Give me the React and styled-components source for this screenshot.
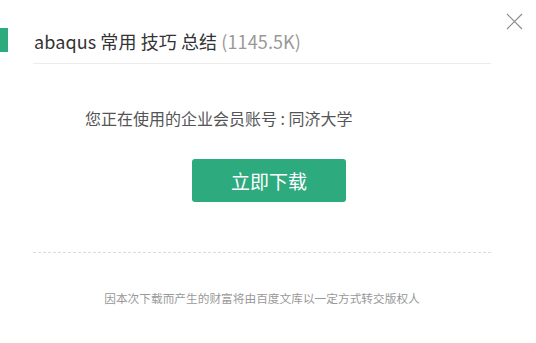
import React from "react";
import styled, { createGlobalStyle } from "styled-components";

const GlobalStyle = createGlobalStyle`
  html, body {
    margin: 0;
    padding: 0;
    background: #ffffff;
  }
  body {
    font-family: "Noto Sans CJK SC", "Noto Sans", sans-serif;
  }
`;

const App = () => {
  return (
    <Dialog>
      <GlobalStyle />
      <CloseButton aria-label="close">
        <svg width="17" height="17" viewBox="0 0 17 17">
          <path d="M1 1 L16 16 M16 1 L1 16" stroke="#8a8a8a" strokeWidth="1.1" />
        </svg>
      </CloseButton>
      <Header>
        <Marker />
        <Title>
          abaqus 常用 技巧 总结 <Size>(1145.5K)</Size>
        </Title>
      </Header>
      <Content>
        <Account>您正在使用的企业会员账号 : 同济大学</Account>
        <ButtonRow>
          <DownloadButton>立即下载</DownloadButton>
        </ButtonRow>
        <Footer>因本次下载而产生的财富将由百度文库以一定方式转交版权人</Footer>
      </Content>
    </Dialog>
  );
};
export default App;

const Dialog = styled.div`
  position: relative;
  width: 536px;
  height: 343px;
  background: #fff;
  overflow: hidden;
`;

const CloseButton = styled.div`
  position: absolute;
  top: 13px;
  left: 506px;
  width: 17px;
  height: 17px;
  display: flex;
`;

const Header = styled.div`
  display: flex;
  align-items: center;
  gap: 26px;
  padding-top: 27px;
`;

const Marker = styled.div`
  width: 8px;
  height: 24px;
  background: #2eaa7f;
`;

const Title = styled.h3`
  margin: 2px 0 0;
  font-size: 18px;
  font-weight: 400;
  color: #333;
  line-height: 24px;
  letter-spacing: 0.1px;
`;

const Size = styled.span`
  color: #999;
`;

const Content = styled.div`
  margin: 10px 45px 0 33px;
  border-top: 1px solid #ececec;
  display: flex;
  flex-direction: column;
`;

const Account = styled.p`
  margin: 43px 0 0 52px;
  font-size: 16px;
  line-height: 22px;
  color: #555;
`;

const ButtonRow = styled.div`
  display: flex;
  justify-content: flex-start;
  padding-left: 159px;
  margin-top: 30px;
`;

const DownloadButton = styled.button`
  width: 154px;
  height: 43px;
  border: none;
  border-radius: 3px;
  background: #2eaa7f;
  color: #fff;
  font-family: "Noto Sans CJK SC", sans-serif;
  font-size: 19px;
  padding: 0;
`;

const Footer = styled.p`
  margin: 50px 0 0;
  padding-top: 36px;
  border-top: 1px dashed #dcdcdc;
  text-align: center;
  font-size: 11.7px;
  line-height: 18px;
  color: #999;
`;
